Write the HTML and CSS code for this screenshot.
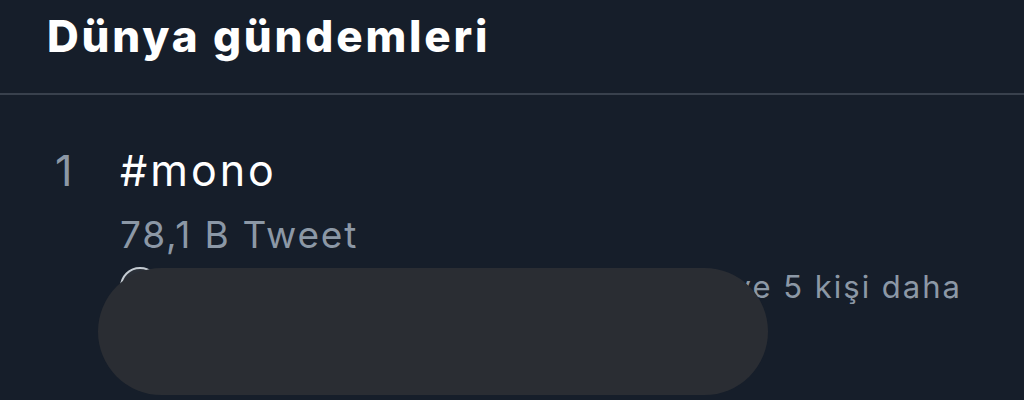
FILE: index.html
```html
<!DOCTYPE html>
<html lang="tr">
<head>
<meta charset="utf-8">
<link rel="stylesheet" href="styles.css">
</head>
<body>
<div class="page">
  <header class="header">
    <h1 class="title">Dünya gündemleri</h1>
  </header>
  <section class="trend">
    <div class="rank">1</div>
    <div class="info">
      <div class="tag">#mono</div>
      <div class="count">78,1 B Tweet</div>
      <div class="context">
        <span class="avatar"></span>
        <span class="names">Kullanıcı, Kullanıcı</span>
        <span class="more">ve 5 kişi daha</span>
      </div>
    </div>
    <div class="redact"></div>
  </section>
</div>
</body>
</html>
```
FILE: styles.css
```css
html, body {
  margin: 0;
  padding: 0;
  background: #161e2a;
}
.page {
  width: 1024px;
  height: 400px;
  overflow: hidden;
  font-family: Inter, "Liberation Sans", sans-serif;
}
.header {
  height: 95px;
  border-bottom: 2px solid #39414d;
  box-sizing: border-box;
  padding: 10px 0 0 47px;
}
.title {
  margin: 0;
  font-size: 44px;
  line-height: 53px;
  font-weight: 800;
  color: #ffffff;
  letter-spacing: 2.8px;
}
.trend {
  position: relative;
  display: flex;
  padding: 51px 0 0 55px;
}
.rank {
  width: 65px;
  font-size: 43px;
  line-height: 48px;
  color: #8c98a6;
}
.info {
  display: flex;
  flex-direction: column;
}
.tag {
  font-size: 43px;
  line-height: 48px;
  color: #ffffff;
  letter-spacing: 3px;
}
.count {
  margin-top: 19px;
  font-size: 37px;
  line-height: 44px;
  color: #8c98a6;
  letter-spacing: 1.8px;
}
.context {
  width: 842px;
  display: flex;
  align-items: center;
  margin-top: 10px;
  font-size: 31px;
  line-height: 40px;
  color: #8c98a6;
  letter-spacing: 2px;
}
.avatar {
  width: 40px;
  height: 40px;
  box-sizing: border-box;
  border-radius: 50%;
  border: 2px solid #c4cbd2;
  background: #2a2f37;
  flex: none;
}
.names {
  flex: 1;
  margin-left: 8px;
  white-space: nowrap;
  overflow: hidden;
}
.more {
  flex: none;
}
.redact {
  position: absolute;
  left: 98px;
  top: 173px;
  width: 670px;
  height: 127px;
  border-radius: 64px;
  background: #2a2d33;
}
```
